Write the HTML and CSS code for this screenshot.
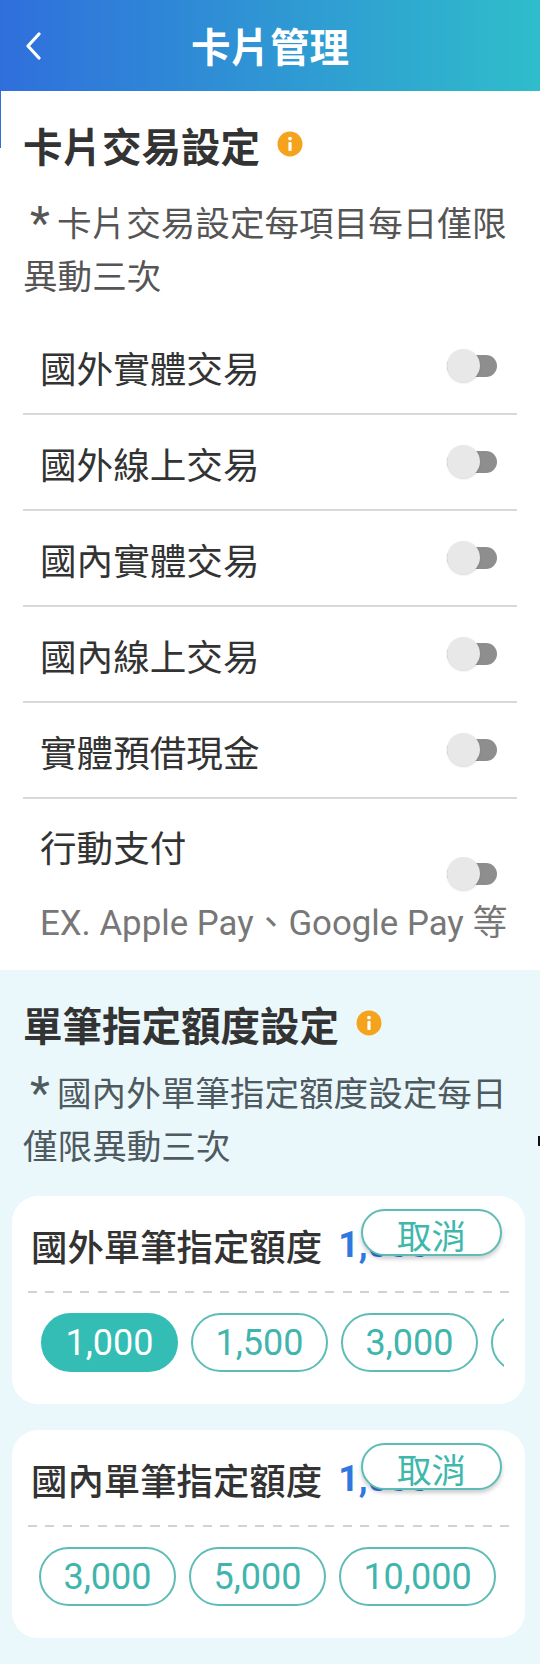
FILE: index.html
```html
<!DOCTYPE html>
<html lang="zh-Hant">
<head>
<meta charset="utf-8">
<title>卡片管理</title>
<link rel="stylesheet" href="styles.css">
</head>
<body>
<header class="topbar">
  <svg class="back" viewBox="0 0 16 28" width="16" height="28"><path d="M14 2 3 14l11 12" fill="none" stroke="#fff" stroke-width="3.2" stroke-linecap="round" stroke-linejoin="round"/></svg>
  <h1>卡片管理</h1>
</header>
<main>
  <section class="plain">
    <h2 class="heading">卡片交易設定
      <svg class="info" viewBox="0 0 26 26" width="26" height="26"><circle cx="13" cy="13" r="12.5" fill="#f5a31c"/><circle cx="13" cy="7.6" r="1.9" fill="#fff"/><rect x="11.4" y="11" width="3.2" height="9" rx="1" fill="#fff"/></svg>
    </h2>
    <p class="note"><span class="star">*</span>卡片交易設定每項目每日僅限異動三次</p>
    <ul class="rows">
      <li class="row"><span>國外實體交易</span><i class="toggle"></i></li>
      <li class="row"><span>國外線上交易</span><i class="toggle"></i></li>
      <li class="row"><span>國內實體交易</span><i class="toggle"></i></li>
      <li class="row"><span>國內線上交易</span><i class="toggle"></i></li>
      <li class="row"><span>實體預借現金</span><i class="toggle"></i></li>
      <li class="row tall">
        <div class="tall-text"><span>行動支付</span><small>EX. Apple Pay、Google Pay 等</small></div>
        <i class="toggle"></i>
      </li>
    </ul>
  </section>
  <section class="tinted">
    <h2 class="heading">單筆指定額度設定
      <svg class="info" viewBox="0 0 26 26" width="26" height="26"><circle cx="13" cy="13" r="12.5" fill="#f5a31c"/><circle cx="13" cy="7.6" r="1.9" fill="#fff"/><rect x="11.4" y="11" width="3.2" height="9" rx="1" fill="#fff"/></svg>
    </h2>
    <p class="note"><span class="star">*</span>國內外單筆指定額度設定每日僅限異動三次</p>
    <article class="card">
      <div class="card-head"><h3>國外單筆指定額度</h3><b class="amount">1,000</b><button class="cancel">取消</button></div>
      <div class="chips">
        <span class="chip on">1,000</span><span class="chip">1,500</span><span class="chip">3,000</span><span class="chip">5,000</span>
      </div>
    </article>
    <article class="card second">
      <div class="card-head"><h3>國內單筆指定額度</h3><b class="amount">1,000</b><button class="cancel">取消</button></div>
      <div class="chips">
        <span class="chip">3,000</span><span class="chip">5,000</span><span class="chip wide">10,000</span>
      </div>
    </article>
  </section>
</main>
</body>
</html>
```

FILE: styles.css
```css
* { box-sizing: border-box; }
html, body { margin: 0; padding: 0; }
body {
  width: 540px;
  height: 1664px;
  overflow: hidden;
  background: #fff;
  color: #333;
  font-family: Roboto, "Noto Sans CJK TC", sans-serif;
  display: flex;
  flex-direction: column;
}
.topbar {
  position: relative;
  flex: 0 0 91px;
  display: flex;
  align-items: center;
  justify-content: center;
  padding-top: 6px;
  background: linear-gradient(90deg, #2f6fdc 0%, #2fbdcb 100%);
}
.back { position: absolute; left: 25px; top: 32px; }
.topbar h1 { margin: 0; color: #fff; font-size: 39.5px; line-height: 50px; font-weight: 700; }
main { flex: 1; display: flex; flex-direction: column; }
.plain { position: relative; padding: 27px 23px 0 23px; }
.plain::before {
  content: "";
  position: absolute;
  left: 0;
  top: 0;
  width: 1px;
  height: 57px;
  background: #2f6fdc;
}
.heading {
  display: flex;
  align-items: center;
  gap: 17px;
  margin: 0;
  height: 52px;
  font-size: 39.5px;
  font-weight: 700;
  color: #333;
}
.note {
  margin: 28px 0 0;
  font-size: 34.6px;
  line-height: 53px;
  color: #555;
}
.star {
  display: inline-block;
  width: 34px;
  text-align: center;
  font-size: 46px;
  font-weight: 400;
  line-height: 30px;
  vertical-align: -3px;
}
.rows { list-style: none; margin: 15px 0 0; padding: 0; }
.row {
  height: 96px;
  display: flex;
  align-items: center;
  justify-content: space-between;
  padding: 0 20px 0 17px;
  border-bottom: 2px solid #d9d9d9;
  font-size: 36.6px;
  color: #333;
}
.row > span { position: relative; top: 1px; }
.row.tall {
  height: 171px;
  border-bottom: 0;
  align-items: flex-start;
  position: relative;
}
.tall-text { display: flex; flex-direction: column; padding-top: 24px; }
.tall-text span { line-height: 54px; }
.tall-text small { font-size: 34.8px; line-height: 48px; margin-top: 22px; color: #777; white-space: nowrap; }
.row.tall .toggle { position: absolute; right: 20px; top: 64px; }
.toggle {
  position: relative;
  display: block;
  width: 50px;
  height: 22px;
  border-radius: 11px;
  background: #8e8e8e;
}
.toggle::before {
  content: "";
  position: absolute;
  left: 0;
  top: -6px;
  width: 33px;
  height: 33px;
  border-radius: 50%;
  background: #e8e8e8;
  box-shadow: 0 1px 2px rgba(0,0,0,.15);
}
.tinted {
  position: relative;
  flex: 1;
  padding: 27px 15px 0 12px;
  background: #eaf8fc;
}
.tinted::after {
  content: "";
  position: absolute;
  right: 0;
  top: 166px;
  width: 2px;
  height: 10px;
  background: #111;
}
.tinted .heading { padding-left: 11px; }
.tinted .note { padding-left: 11px; margin-top: 19px; color: #4f5a60; }
.card {
  position: relative;
  margin-top: 22px;
  height: 208px;
  background: #fff;
  border-radius: 26px;
  padding: 0 15px 0 16px;
}
.card.second { margin-top: 26px; }
.card-head {
  height: 97px;
  background: repeating-linear-gradient(90deg, #d2d2d2 0 9px, transparent 9px 17.5px) left bottom / 100% 2px no-repeat;
  display: flex;
  align-items: center;
  gap: 16px;
  padding: 0 0 0 3px;
}
.card-head h3 { margin: 0; font-size: 36.4px; font-weight: 500; color: #333; white-space: nowrap; }
.amount { color: #2f78e0; font-size: 36px; font-weight: 700; }
.cancel {
  position: absolute;
  top: 13px;
  right: 23px;
  width: 141px;
  height: 47px;
  background: #fff;
  border: 2px solid #5dbdb6;
  border-radius: 24px;
  color: #3fb8ac;
  font: 34.5px/42px "Noto Sans CJK TC", sans-serif;
  padding: 2px 0 0;
  box-shadow: 0 3px 4px rgba(0,0,0,.2);
}
.chips {
  display: flex;
  gap: 13px;
  margin: 20px 6px 0 13px;
  overflow: hidden;
}
.chip {
  flex: 0 0 137px;
  height: 59px;
  border: 2px solid #5dbdb6;
  border-radius: 30px;
  display: flex;
  align-items: center;
  justify-content: center;
  font-size: 36px;
  color: #3fb5ad;
}
.chip.on { background: #34bdb4; border-color: #34bdb4; color: #fff; }
.chip.wide { flex-basis: 157px; }
.second .chips { margin-left: 11px; margin-right: 0; }
```
